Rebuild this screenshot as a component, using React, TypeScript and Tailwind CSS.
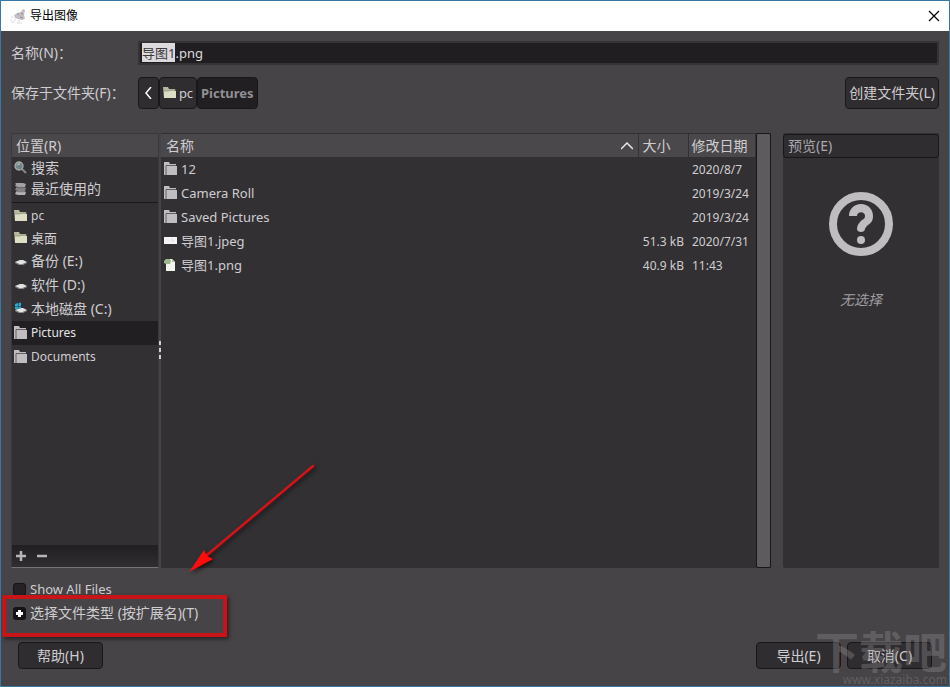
import { useEffect, useRef, type ReactNode } from "react";

type IconName = "search" | "recent" | "folder" | "dir" | "drive" | "system" | "thumb" | "file";

const places: { label: string; icon: IconName; row: string; active?: boolean }[] = [
    { label: "pc", icon: "folder", row: "h-[23px] text-xs" },
    { label: "桌面", icon: "folder", row: "h-[22px] text-[13px]" },
    { label: "备份 (E:)", icon: "drive", row: "h-6 text-sm" },
    { label: "软件 (D:)", icon: "drive", row: "h-6 text-sm" },
    { label: "本地磁盘 (C:)", icon: "system", row: "h-6 text-sm" },
    { label: "Pictures", icon: "dir", row: "h-6 text-xs", active: true },
    { label: "Documents", icon: "dir", row: "h-6 text-xs" },
];

const files: { name: string; icon: IconName; size: string; date: string }[] = [
    { name: "12", icon: "dir", size: "", date: "2020/8/7" },
    { name: "Camera Roll", icon: "dir", size: "", date: "2019/3/24" },
    { name: "Saved Pictures", icon: "dir", size: "", date: "2019/3/24" },
    { name: "导图1.jpeg", icon: "thumb", size: "51.3 kB", date: "2020/7/31" },
    { name: "导图1.png", icon: "file", size: "40.9 kB", date: "11:43" },
];

function Icon({ name }: { name: IconName }) {
    return (
        <svg className="w-[14px] h-[14px] shrink-0" viewBox="0 0 14 14">
            {name === "search" && (
                <>
                    <path d="M8 8l4 4" stroke="#8a888b" strokeWidth="2" />
                    <circle cx="5" cy="5" r="4" fill="#6f8285" stroke="#a9abab" strokeWidth="1.3" />
                    <path d="M3 4.5Q4 2.5 6 3" fill="none" stroke="#d5dcdc" />
                </>
            )}
            {name === "recent" && (
                <>
                    <path d="M1 1h8l3 1-1 3H4L1 4l1-2z" fill="#a3a1a3" />
                    <path d="M2 5h8l2 1-1 3H4L1 8l1-2z" fill="#848284" />
                    <path d="M2 9h8l2 1-1 3H4l-3-1 1-2z" fill="#b4b2b4" />
                    <path d="M2 5l2 .7h7M2 9l2 .7h7" fill="none" stroke="#5b595c" strokeWidth=".7" />
                </>
            )}
            {name === "folder" && (
                <>
                    <path d="M0 1h5l1 2h6v9H1z" fill="#b6ba9c" />
                    <path d="M1 5h12v7H1z" fill="#dcdfc4" />
                    <path d="M1 5h5l1-1h6" fill="none" stroke="#8d9078" strokeWidth=".7" />
                </>
            )}
            {name === "dir" && (
                <>
                    <path d="M0 0h5l1 2h6v2H2v9H0z" fill="#c0bdc1" />
                    <path d="M2 3h5l1 1h5v9H2z" fill="#c0bdc1" />
                    <path d="M2 13V3.500h10" fill="none" stroke="#4b494c" strokeWidth=".8" />
                </>
            )}
            {(name === "drive" || name === "system") && (
                <>
                    <path d="M1 8l5-2h3l4 2-4 2H5z" fill="#e3e3e4" />
                    <path d="M1 8l4 2h4l4-2v1l-4 2H5L1 9z" fill="#8f8e90" />
                </>
            )}
            {name === "system" && <path d="M1 2l3-1v3H1zM4.500 1L7 .5V4H4.500zM1 4.500h3v3L1 7zM4.500 4.500H7v2H4.500z" fill="#25a9cf" />}
            {name === "thumb" && (
                <>
                    <path d="M0 3h13v7H0z" fill="#f6f5f6" />
                    <path d="M3 6h2M7 5h2M7 7h3" stroke="#d0d8d4" strokeWidth=".7" />
                </>
            )}
            {name === "file" && (
                <>
                    <path d="M2 1h6l3 3v9H2z" fill="#f2f4ee" />
                    <path d="M8 1v3h3z" fill="#b5c0ad" />
                    <path d="M0 3l2-2h4l1 2-1 3H2L0 5z" fill="#9bb98d" />
                </>
            )}
        </svg>
    );
}

function DialogButton({ className, children }: { className: string; children: ReactNode }) {
    return (
        <button
            type="button"
            className={`rounded-[4px] border border-[#19171a] bg-[#2f2d30] text-center text-sm leading-5 whitespace-nowrap ${className}`}
        >
            {children}
        </button>
    );
}

export default function App() {
    const nameRef = useRef<HTMLInputElement>(null);

    // Select the base name, leaving the extension alone
    useEffect(() => {
        const input = nameRef.current;
        if (!input) return;
        input.focus();
        input.setSelectionRange(0, input.value.lastIndexOf("."));
    }, []);

    return (
        <div className="relative flex min-h-screen flex-col overflow-hidden border border-[#3a78a4] bg-[#464447] font-['Noto_Sans','Noto_Sans_CJK_SC',sans-serif] text-[13px] leading-5 text-[#cfcdd0]">
            {/* Title bar */}
            <header className="flex h-[30px] items-center bg-white px-[9px] text-black">
                <svg className="mr-1 h-4 w-4" viewBox="0 0 16 16">
                    <path d="M4 7l4-2 3-1 2-3 2 1-1 5 1 4-3 1-4-1-3-1z" fill="#c3bfc4" />
                    <path d="M7 6h2M11 5l2 1M10 9l3 1" stroke="#8f8991" />
                    <path d="M1 9h2M0 12h2M4 12h2M1 14h4M8 13h2M7 15h5" stroke="#dcd9dd" />
                </svg>
                <h1 className="text-xs">导出图像</h1>
                <button type="button" aria-label="关闭" className="ml-auto">
                    <svg className="h-3 w-3" viewBox="0 0 12 12">
                        <path d="M1 1l10 10M11 1L1 11" stroke="#000" strokeWidth="1.2" />
                    </svg>
                </button>
            </header>

            <main className="flex flex-1 flex-col px-[10px] pt-[10px] pb-[17px]">
                <div className="flex items-center">
                    <label htmlFor="name" className="w-[127px] text-sm leading-5">名称(N)：</label>
                    <input
                        id="name"
                        ref={nameRef}
                        defaultValue="导图1.png"
                        className="block h-6 min-w-0 flex-1 border-2 border-[#353336] bg-[#201e21] px-[2px] pb-px text-[13px] leading-4 text-[#dddbde] caret-transparent outline-none selection:bg-[#dcdadd] selection:text-[#3a383b]"
                    />
                </div>

                <div className="mt-3 flex h-8 items-center">
                    <span className="w-[127px] text-sm leading-5">保存于文件夹(F)：</span>
                    <nav className="flex h-8">
                        <DialogButton className="flex w-[21px] items-center justify-center">
                            <svg className="h-3 w-2" viewBox="0 0 8 12">
                                <path d="M6 0L1 6l5 6" fill="none" stroke="#fff" strokeWidth="1.5" />
                            </svg>
                        </DialogButton>
                        <DialogButton className="flex w-[38px] items-center justify-center gap-[2px]">
                            <Icon name="folder" />
                            <span className="text-[13px]">pc</span>
                        </DialogButton>
                        <button type="button" className="rounded-[4px] border border-[#19171a] bg-[#211f22] px-[3px] text-[13px] font-bold text-[#929093]">
                            Pictures
                        </button>
                    </nav>
                    <DialogButton className="ml-auto h-8 px-[3px]">创建文件夹(L)</DialogButton>
                </div>

                <div className="mt-6 flex flex-1">
                    {/* Places */}
                    <aside className="relative mr-[2px] flex w-[148px] flex-col border border-b-[#757376] border-[#3a383b] bg-[#323033]">
                        <h2 className="h-[23px] bg-[#4a484b] px-1 text-sm leading-6">位置(R)</h2>
                        <ul className="text-sm leading-5">
                            <li className="flex h-[22px] items-center gap-[3px] px-[2px]">
                                <Icon name="search" />
                                搜索
                            </li>
                            <li className="flex h-5 items-center gap-[3px] px-[2px]">
                                <Icon name="recent" />
                                最近使用的
                            </li>
                        </ul>
                        <hr className="mt-[3px] mb-px border-[#19171a]" />
                        <ul>
                            {places.map((p) => (
                                <li
                                    key={p.label}
                                    className={`flex items-center gap-[3px] px-[2px] ${p.row} ${p.active ? "bg-[#211f22] text-[#e6e4e7]" : ""}`}
                                >
                                    <Icon name={p.icon} />
                                    {p.label}
                                </li>
                            ))}
                        </ul>
                        <div className="mt-auto flex h-[22px] items-center gap-[9px] bg-gradient-to-b from-[#211f22] to-[#302e31] px-[3px]">
                            <button type="button" aria-label="添加">
                                <svg className="h-3 w-3" viewBox="0 0 12 12"><path d="M6 1v10M1 6h10" stroke="#b8b6b9" strokeWidth="2.500" /></svg>
                            </button>
                            <button type="button" aria-label="删除">
                                <svg className="h-3 w-3" viewBox="0 0 12 12"><path d="M1 6h10" stroke="#b8b6b9" strokeWidth="2.500" /></svg>
                            </button>
                        </div>
                        <div className="absolute top-[207px] -right-[3px] flex flex-col gap-[3px]">
                            <i className="h-1 w-[2px] bg-[#d0ced1]" />
                            <i className="h-1 w-[2px] bg-[#d0ced1]" />
                            <i className="h-1 w-[2px] bg-[#d0ced1]" />
                        </div>
                    </aside>

                    {/* File list */}
                    <section className="flex flex-1 bg-[#323033]">
                        <div className="min-w-0 flex-1 pt-px">
                            <table className="w-full table-fixed border-collapse text-left">
                                <thead>
                                    <tr className="h-[23px] bg-[#4a484b] text-sm">
                                        <th className="px-[5px] font-normal">
                                            <span className="flex items-center justify-between">
                                                名称
                                                <svg className="h-2 w-3" viewBox="0 0 12 8"><path d="M0 7l6-6 6 6" fill="none" stroke="#e8e6e9" strokeWidth="1.500" /></svg>
                                            </span>
                                        </th>
                                        <th className="w-[50px] border-l border-[#343235] px-1 font-normal">大小</th>
                                        <th className="w-[67px] border-l border-[#343235] px-[3px] font-normal whitespace-nowrap">修改日期</th>
                                    </tr>
                                </thead>
                                <tbody>
                                    {files.map((f) => (
                                        <tr key={f.name} className="h-6">
                                            <td className="px-[3px]">
                                                <span className="flex items-center gap-[3px]">
                                                    <Icon name={f.icon} />
                                                    {f.name}
                                                </span>
                                            </td>
                                            <td className="pt-[2px] pr-1 text-right text-xs whitespace-nowrap">{f.size}</td>
                                            <td className="px-1 pt-[2px] text-xs whitespace-nowrap">{f.date}</td>
                                        </tr>
                                    ))}
                                </tbody>
                            </table>
                        </div>
                        <div className="ml-px w-[15px] rounded-[2px] border border-[#19171a] bg-[#5d5b5e]" />
                    </section>

                    {/* Preview */}
                    <aside className="ml-3 flex w-[156px] flex-col items-center rounded-[2px] bg-[#323033]">
                        <button type="button" className="mt-px h-6 w-full rounded-[3px] border border-[#19171a] bg-[#2f2d30] px-1 text-left text-sm text-[#aaa8ab]">
                            预览(E)
                        </button>
                        <svg className="mt-[34px] h-16 w-16" viewBox="0 0 64 64">
                            <circle cx="32" cy="32" r="28" fill="none" stroke="#c0bdc1" strokeWidth="8" />
                            <path d="M20 24c0-7 5-12 12-12s12 5 12 12c0 5-2 7-5 9-2 2-3 3-3 4 0 4-8 4-8 0 0-4 2-6 5-9 2-1 3-2 3-4 0-5-8-5-8 0z" fill="#c0bdc1" />
                            <circle cx="32" cy="48" r="4" fill="#c0bdc1" />
                        </svg>
                        <p className="mt-[34px] text-sm text-[#a09ea1] italic">无选择</p>
                    </aside>
                </div>

                {/* Options */}
                <div className="mt-[11px] flex flex-col items-start gap-1 pl-[2px]">
                    <label className="flex h-5 items-center gap-1">
                        <input type="checkbox" className="h-[13px] w-[13px] appearance-none rounded-[3px] border border-[#151316] bg-[#242225]" />
                        Show All Files
                    </label>
                    <div className="relative">
                        <button type="button" className="flex h-5 items-center gap-1 text-sm">
                            <svg className="h-[13px] w-[13px]" viewBox="0 0 13 13">
                                <rect width="13" height="13" rx="3" fill="#151316" />
                                <path d="M6.500 3v7M3 6.500h7" stroke="#fff" strokeWidth="3" />
                            </svg>
                            选择文件类型 (按扩展名)(T)
                        </button>
                        <div className="pointer-events-none absolute -top-2 -left-[11px] h-[42px] w-[225px] border-4 border-[#c81417] shadow-[2px_2px_4px_rgba(0,0,0,0.5)]" />
                        <svg className="pointer-events-none absolute -top-[163px] left-[147px] h-[150px] w-[180px] drop-shadow-[2px_2px_2px_rgba(0,0,0,0.6)]" viewBox="0 0 180 150">
                            <path d="M153 26L47 115" stroke="#d51215" strokeWidth="2.500" strokeLinecap="round" />
                            <path d="M29 132l15-22 3 6 6 3z" fill="#ff0b0b" />
                        </svg>
                    </div>
                </div>

                <footer className="mt-[19px] flex gap-[6px] px-[7px]">
                    <DialogButton className="mr-auto h-[27px] w-[85px]">帮助(H)</DialogButton>
                    <DialogButton className="h-[27px] w-[85px]">导出(E)</DialogButton>
                    <DialogButton className="h-[27px] w-[85px]">取消(C)</DialogButton>
                </footer>
            </main>

            {/* Watermark */}
            <div className="pointer-events-none absolute right-[2px] bottom-0 text-right text-[#8c8a8d]/40">
                <p className="text-[44px] leading-[44px] font-bold">下载吧</p>
                <p className="text-xs leading-3">www.xiazaiba.com</p>
            </div>
        </div>
    );
}
